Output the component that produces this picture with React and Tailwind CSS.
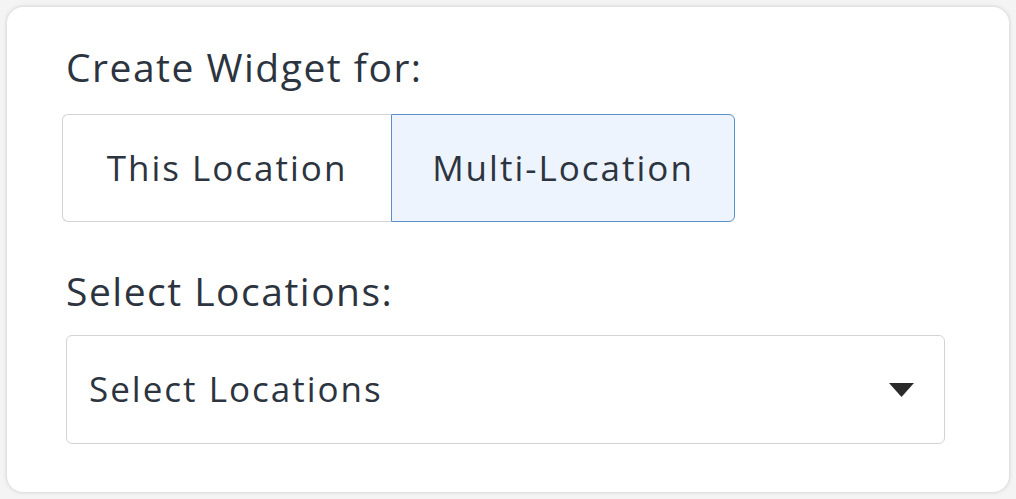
import { useState } from 'react';

export default function App() {
  const [mode, setMode] = useState('multi');

  return (
    <div className="w-[1016px] h-[499px] bg-[#f4f4f4] p-[7px] font-['Open_Sans',sans-serif] text-[#2c3440]">
      <div className="h-[485px] bg-white rounded-[16px] shadow-[0_0_4px_rgba(0,0,0,0.18)] pl-[55px] pt-[41px]">
        <h2 className="pl-[4px] text-[39px] leading-[38px] tracking-[1.5px]">Create Widget for:</h2>
        <div className="mt-[28px] flex">
          <button
            onClick={() => setMode('this')}
            className={`w-[329px] h-[108px] text-[35px] tracking-[2px] rounded-l-[6px] border ${mode === 'this' ? 'bg-[#eef4fe] border-[#5b8fc9]' : 'bg-white border-[#d3d3d3] border-r-0'}`}
          >
            This Location
          </button>
          <button
            onClick={() => setMode('multi')}
            className={`w-[344px] h-[108px] text-[35px] tracking-[2px] rounded-r-[6px] border ${mode === 'multi' ? 'bg-[#eef4fe] border-[#5b8fc9]' : 'bg-white border-[#d3d3d3]'}`}
          >
            Multi-Location
          </button>
        </div>
        <h2 className="mt-[50px] pl-[4px] text-[39px] leading-[38px] tracking-[1.5px]">Select Locations:</h2>
        <div className="mt-[25px] ml-[4px] w-[879px] h-[109px] border border-[#d3d3d3] rounded-[6px] flex items-center justify-between pl-[22px] pr-[30px]">
          <span className="text-[35px] tracking-[2px]">Select Locations</span>
          <svg width="25" height="14" viewBox="0 0 25 14">
            <path d="M0 0 H25 L12.5 14 Z" fill="#2b2b2b" />
          </svg>
        </div>
      </div>
    </div>
  );
}
